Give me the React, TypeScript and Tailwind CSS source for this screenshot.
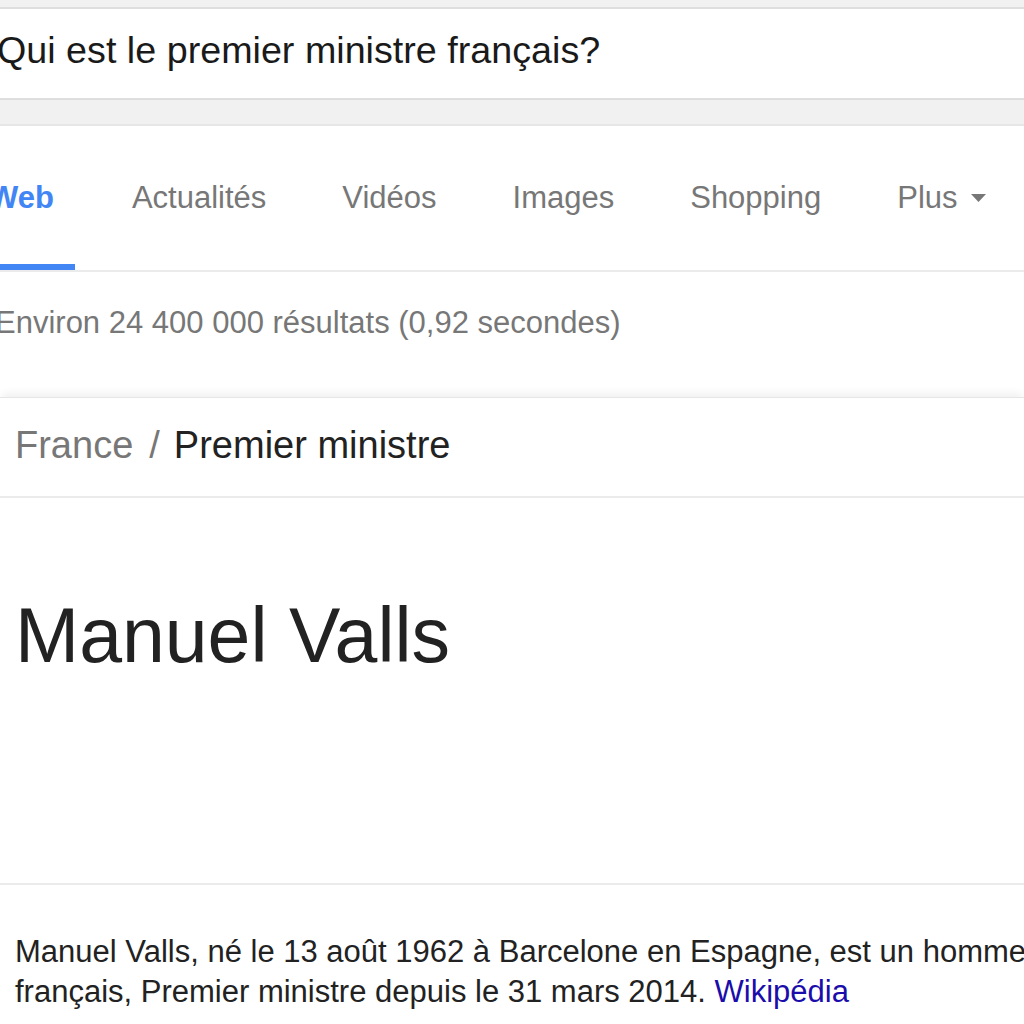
const tabs = ['Actualités', 'Vidéos', 'Images', 'Shopping'];

export default function App() {
  return (
    <div className="min-h-[1024px] w-[1024px] overflow-hidden bg-white font-['Liberation_Sans',Arial,sans-serif]">
      {/* Top search box */}
      <div className="h-[7px] bg-[#f1f1f1]" />
      <div className="h-[93px] border-y-2 border-[#dedede] bg-white pt-[22px]">
        <div className="-ml-[3px] whitespace-nowrap text-[37.7px] leading-[38px] text-[#1a1a1a]">
          Qui est le premier ministre français?
        </div>
      </div>
      <div className="h-[26px] border-b-2 border-[#e6e6e6] bg-[#f1f1f1]" />

      {/* Tabs */}
      <div className="border-b-2 border-[#ebebeb] pt-[56px]">
        <div className="flex items-start gap-[76px] whitespace-nowrap text-[31px] leading-[31px] text-[#777]">
          <div className="-ml-[11px] -mr-[19px] border-b-[6px] border-[#4285f4] pb-[51px] pr-[21px] font-bold text-[#4285f4]">
            Web
          </div>
          {tabs.map((t) => (
            <div key={t}>{t}</div>
          ))}
          <div className="flex items-center gap-[13px]">
            <span>Plus</span>
            <svg width="15" height="8" viewBox="0 0 15 8" className="mt-[1px]">
              <path d="M0 0 L15 0 L7.5 8 Z" fill="#777" />
            </svg>
          </div>
        </div>
      </div>

      {/* Results count */}
      <div className="-ml-[5px] mt-[35px] whitespace-nowrap text-[31px] leading-[31px] text-[#777]">
        Environ 24 400 000 résultats (0,92 secondes)
      </div>

      {/* Answer card */}
      <div className="mt-[59px] border-t border-[#e6e6e6] bg-white shadow-[0_-6px_8px_-2px_rgba(0,0,0,0.06)]">
        <div className="flex items-baseline whitespace-nowrap border-b-2 border-[#ebebeb] pb-[32px] pl-[15px] pt-[28px] text-[38px] leading-[38px]">
          <span className="text-[#777]">France</span>
          <span className="ml-[16px] text-[#777]">/</span>
          <span className="ml-[14px] text-[#222]">Premier ministre</span>
        </div>
        <div className="border-b-2 border-[#ebebeb] pb-[209px] pl-[15px] pt-[99px]">
          <div className="whitespace-nowrap text-[77px] leading-[77px] text-[#222]">
            Manuel Valls
          </div>
        </div>
        <div className="whitespace-nowrap pl-[15px] pt-[47px] text-[31px] leading-[40px] text-[#222]">
          <div>Manuel Valls, né le 13 août 1962 à Barcelone en Espagne, est un homme politique</div>
          <div>
            français, Premier ministre depuis le 31 mars 2014.{' '}
            <span className="text-[#1a0dab]">Wikipédia</span>
          </div>
        </div>
      </div>
    </div>
  );
}
